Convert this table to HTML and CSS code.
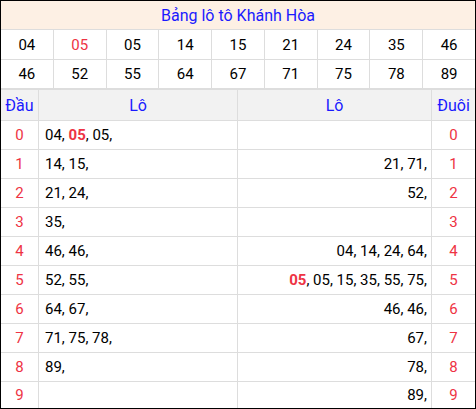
FILE: index.html
```html
<!DOCTYPE html>
<html lang="vi">
<head>
<meta charset="utf-8">
<title>Bảng lô tô Khánh Hòa</title>
<link rel="stylesheet" href="styles.css">
</head>
<body>
<div class="wrap">
  <div class="nums">
    <div class="title">Bảng lô tô Khánh Hòa</div>
    <div class="n">04</div><div class="n red">05</div><div class="n">05</div><div class="n">14</div><div class="n">15</div><div class="n">21</div><div class="n">24</div><div class="n">35</div><div class="n">46</div>
    <div class="n">46</div><div class="n">52</div><div class="n">55</div><div class="n">64</div><div class="n">67</div><div class="n">71</div><div class="n">75</div><div class="n">78</div><div class="n">89</div>
  </div>
  <div class="lo">
    <div class="h">Đầu</div><div class="h">Lô</div><div class="h">Lô</div><div class="h">Đuôi</div>

    <div class="d">0</div><div class="l"><span>04, <b class="red">05</b>, 05,</span></div><div class="r"></div><div class="d">0</div>
    <div class="d">1</div><div class="l"><span>14, 15,</span></div><div class="r"><span>21, 71,</span></div><div class="d">1</div>
    <div class="d">2</div><div class="l"><span>21, 24,</span></div><div class="r"><span>52,</span></div><div class="d">2</div>
    <div class="d">3</div><div class="l"><span>35,</span></div><div class="r"></div><div class="d">3</div>
    <div class="d">4</div><div class="l"><span>46, 46,</span></div><div class="r"><span>04, 14, 24, 64,</span></div><div class="d">4</div>
    <div class="d">5</div><div class="l"><span>52, 55,</span></div><div class="r"><span><b class="red">05</b>, 05, 15, 35, 55, 75,</span></div><div class="d">5</div>
    <div class="d">6</div><div class="l"><span>64, 67,</span></div><div class="r"><span>46, 46,</span></div><div class="d">6</div>
    <div class="d">7</div><div class="l"><span>71, 75, 78,</span></div><div class="r"><span>67,</span></div><div class="d">7</div>
    <div class="d">8</div><div class="l"><span>89,</span></div><div class="r"><span>78,</span></div><div class="d">8</div>
    <div class="d">9</div><div class="l"></div><div class="r"><span>89,</span></div><div class="d">9</div>
  </div>
</div>
</body>
</html>
```
FILE: styles.css
```css
* { box-sizing: border-box; }
html, body { margin: 0; padding: 0; background: #fff; }
body {
  font-family: Roboto, "Liberation Sans", Arial, sans-serif;
  font-size: 15px;
  color: #000;
}
.wrap {
  width: 476px;
  height: 409px;
  border: 1px solid #000;
  display: flex;
  flex-direction: column;
}
.nums {
  display: grid;
  grid-template-columns: repeat(9, 1fr);
  grid-template-rows: 28px 29px 28px;
  gap: 1px;
  background: #ddd;
}
.nums > div {
  background: #fff;
  display: flex;
  align-items: center;
  justify-content: center;
}
.nums > .title {
  grid-column: 1 / -1;
  background: #fdf0e4;
  color: #1a1aff;
  font-size: 16px;
}
.red { color: #ee3344; }
b.red { font-weight: 700; }
.lo {
  flex: 1;
  display: grid;
  grid-template-columns: 37px 198px 193px 43px;
  grid-template-rows: 30px repeat(9, 28px) 1fr;
  gap: 1px;
  background: #ddd;
  border-top: 2px solid #ddd;
}
.lo > div {
  background: #fff;
  display: flex;
  align-items: center;
}
.lo > .h {
  background: #f2f2f2;
  color: #1a1aff;
  justify-content: center;
  font-size: 16px;
}
.lo > .d {
  color: #ee3344;
  justify-content: center;
}
.lo > .l {
  padding-left: 6px;
}
.lo > .r {
  justify-content: flex-end;
  padding-right: 4px;
}
```
